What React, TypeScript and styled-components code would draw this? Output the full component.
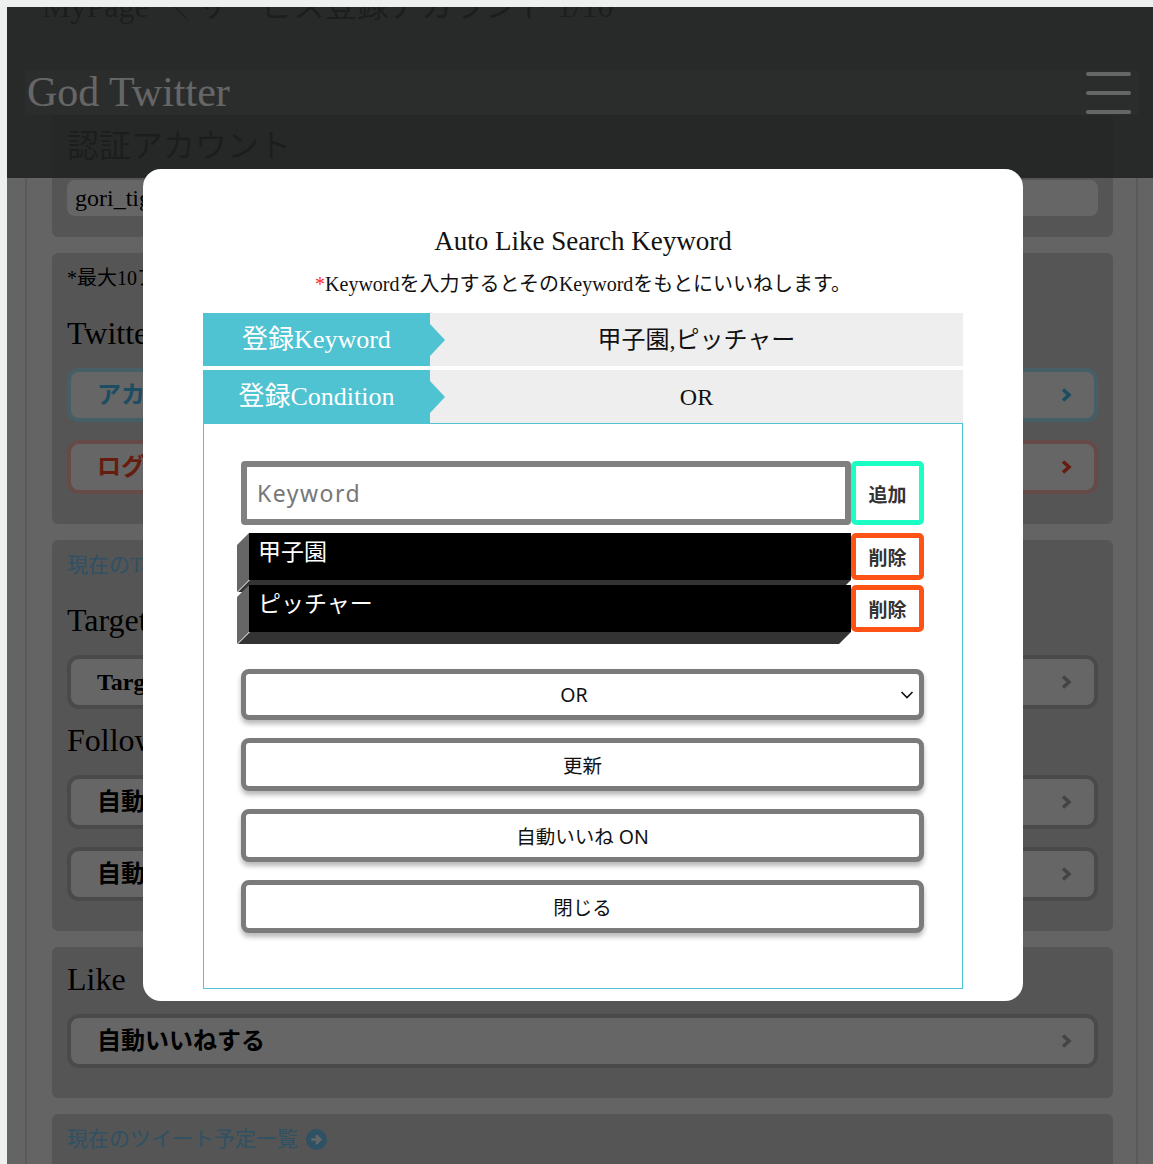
import React from "react";
import styled, { createGlobalStyle } from "styled-components";

const SERIF = `"Liberation Serif", "Noto Sans CJK JP", serif`;
const SANS = `"Noto Sans", "Noto Sans CJK JP", sans-serif`;
const CJK_SANS = `"Noto Sans CJK JP", "Noto Sans", sans-serif`;

const GlobalStyle = createGlobalStyle`
  *, *::before, *::after { box-sizing: border-box; }
  html, body { margin: 0; padding: 0; background: #eef0f0; }
  body { font-family: ${SERIF}; color: #000; }
`;

/* ---------- page behind the dialog ---------- */

const Screen = styled.div`
  position: relative;
  margin: 7px 0 0 7px;
  height: 1157px;
  overflow: hidden;
  background: #fbfbfb;
`;

const Header = styled.header`
  height: 171px;
  background: #646969;
  overflow: hidden;
`;

const Breadcrumb = styled.div`
  display: flow-root;
  height: 63px;
  padding-left: 35px;
  font-size: 32px;
  line-height: 32px;
  color: #474b4b;
  white-space: nowrap;
`;

const BreadcrumbText = styled.div`
  margin-top: -17px;
`;

const BrandBar = styled.div`
  height: 45px;
  margin: 0 15px 0 18px;
  background: #6c7171;
  display: flex;
  align-items: center;
  justify-content: space-between;
  padding: 0 7px 0 2px;
`;

const Brand = styled.h1`
  margin: 0;
  font: 400 42px/45px ${SERIF};
  color: #ffffff;
`;

const Burger = styled.div`
  width: 45px;
  display: flex;
  flex-direction: column;
  gap: 15px;
`;

const BurgerLine = styled.span`
  display: block;
  height: 4px;
  border-radius: 2px;
  background: #ffffff;
`;

const AuthHead = styled.div`
  height: 63px;
  margin: 0 40px 0 45px;
  background: #5f6464;
  padding: 0 15px;
  font: 400 32px/63px ${SERIF};
  color: #474b4b;
`;

const Container = styled.main`
  margin: 0 15px 0 18px;
  border-left: 2px solid #e2e2e2;
  border-right: 2px solid #e2e2e2;
  padding: 0 23px 60px 25px;
  display: flex;
  flex-direction: column;
  gap: 16px;
`;

const Card = styled.section<{ $flushTop?: boolean }>`
  background: #d4d4d4;
  border-radius: ${(p) => (p.$flushTop ? "0 0 6px 6px" : "6px")};
  padding: ${(p) => (p.$flushTop ? "2px 15px 21px" : "12px 15px 30px")};
  display: flex;
  flex-direction: column;
`;

const AccountField = styled.div`
  height: 36px;
  background: #ffffff;
  border-radius: 8px;
  padding: 0 8px;
  font: 400 24px/36px ${SERIF};
  color: #000;
`;

const Note = styled.p`
  margin: 0 0 22px;
  font: 400 20px/26px ${SERIF};
  color: #000;
`;

const SectionLink = styled.a<{ $last?: boolean }>`
  display: flex;
  align-items: center;
  gap: 8px;
  margin: 0 0 ${(p) => (p.$last ? "0" : "22px")};
  font: 400 21px/26px ${SERIF};
  color: #73cbf8;
  text-decoration: none;
`;

const SectionTitle = styled.h2<{ $after?: "button" }>`
  margin: ${(p) => (p.$after === "button" ? "11px" : "0")} 0 15px;
  font: 400 32px/40px ${SERIF};
  color: #000;
`;

const ButtonStack = styled.div`
  display: flex;
  flex-direction: column;
  gap: 18px;
`;

type Tone = "blue" | "red" | "gray";
const tones: Record<Tone, { border: string; text: string; icon: string }> = {
  blue: { border: "#aeecfd", text: "#48c0f5", icon: "#48c0f5" },
  red: { border: "#ffb8b2", text: "#ff4a2a", icon: "#ff4a2a" },
  gray: { border: "#b9b9b9", text: "#000000", icon: "#aaaaaa" },
};

const MenuButton = styled.button<{ $tone: Tone }>`
  height: 54px;
  border: 4px solid ${(p) => tones[p.$tone].border};
  border-radius: 12px;
  background: #ffffff;
  padding: 0 22px 0 26px;
  display: flex;
  align-items: center;
  justify-content: space-between;
  font: 700 24px/1 ${SERIF};
  color: ${(p) => tones[p.$tone].text};
  text-align: left;
`;

const Chevron = ({ color }: { color: string }) => (
  <svg width="12" height="16" viewBox="0 0 12 16">
    <path d="M3 2.5l6 5.5-6 5.5" stroke={color} strokeWidth="3.6" fill="none" />
  </svg>
);

const CircleArrow = ({ color }: { color: string }) => (
  <svg width="21" height="21" viewBox="0 0 20 20">
    <circle cx="10" cy="10" r="10" fill={color} />
    <path d="M5 10h8M9.5 6l4 4-4 4" stroke="#ffffff" strokeWidth="2.6" fill="none" />
  </svg>
);

/* ---------- dialog ---------- */

const Backdrop = styled.div`
  position: absolute;
  inset: 0;
  background: rgba(0, 0, 0, 0.6);
`;

const Modal = styled.div`
  position: absolute;
  left: 136px;
  top: 162px;
  width: 880px;
  background: #ffffff;
  border-radius: 18px;
  padding: 55px 60px 12px;
  display: flex;
  flex-direction: column;
`;

const ModalTitle = styled.h2`
  margin: 0;
  text-align: center;
  font: 400 27px/34px ${SERIF};
  color: #111;
`;

const ModalLead = styled.p`
  margin: 12px 0 15px;
  text-align: center;
  font: 400 20px/28px ${SERIF};
  color: #111;
`;

const Required = styled.span`
  color: #ff2a2a;
`;

const InfoTable = styled.div`
  display: flex;
  flex-direction: column;
  gap: 4px;
`;

const InfoRow = styled.div`
  display: grid;
  grid-template-columns: 227px 1fr;
  height: 53px;
`;

const InfoLabel = styled.div`
  position: relative;
  background: #4fc3d1;
  color: #ffffff;
  display: flex;
  align-items: center;
  justify-content: center;
  font: 400 26px/1 ${SERIF};
  &::after {
    content: "";
    position: absolute;
    right: -15px;
    top: 50%;
    transform: translateY(-50%);
    border-left: 15px solid #4fc3d1;
    border-top: 16px solid transparent;
    border-bottom: 16px solid transparent;
  }
`;

const InfoValue = styled.div`
  background: #eeeeee;
  display: flex;
  align-items: center;
  justify-content: center;
  font: 400 24px/1 ${SERIF};
  color: #111;
`;

const FormBox = styled.div`
  border: 1px solid #4fc3d1;
  padding: 37px 38px 55px 37px;
  display: flex;
  flex-direction: column;
`;

const EntryRow = styled.div`
  display: flex;
  height: 64px;
`;

const KeywordInput = styled.input`
  flex: 1;
  min-width: 0;
  height: 100%;
  border: 6px solid #808080;
  border-radius: 4px;
  padding: 0 10px;
  font: 400 23px ${SANS};
  letter-spacing: 1.5px;
  color: #222;
  background: #ffffff;
  outline: none;
  &::placeholder {
    color: #777777;
  }
`;

const TagButton = styled.button<{ $kind: "add" | "remove" }>`
  width: 73px;
  flex: none;
  padding: 0;
  border: 5px solid ${(p) => (p.$kind === "add" ? "#1cffc4" : "#ff5316")};
  border-radius: 5px;
  background: #ffffff;
  font: 700 19px/1 ${CJK_SANS};
  color: #333333;
`;

const KeywordList = styled.div`
  display: flex;
  flex-direction: column;
  gap: 5px;
  margin-top: 8px;
`;

const KeywordRow = styled.div`
  display: flex;
  height: 47px;
`;

const KeywordBar = styled.div`
  position: relative;
  flex: 1;
  margin-left: 8px;
  background: #000000;
  color: #ffffff;
  padding: 3px 9px;
  font: 400 23px/28px ${CJK_SANS};
  &::before {
    content: "";
    position: absolute;
    left: -12px;
    top: 0;
    width: 12px;
    height: calc(100% + 12px);
    background: #666666;
    clip-path: polygon(0 12px, 100% 0, 100% calc(100% - 12px), 0 100%);
  }
  &::after {
    content: "";
    position: absolute;
    left: -11px;
    bottom: -12px;
    width: calc(100% + 11px);
    height: 12px;
    background: #333333;
    clip-path: polygon(12px 0, 100% 0, calc(100% - 12px) 100%, 0 100%);
  }
`;

const SelectWrap = styled.div`
  position: relative;
  margin-top: 37px;
  height: 51px;
`;

const ConditionSelect = styled.select`
  appearance: none;
  width: 100%;
  height: 100%;
  border: 5px solid #7b7b7b;
  border-radius: 8px;
  background: #ffffff;
  padding: 0 17px 0 0;
  font: 400 19.5px ${SANS};
  color: #111;
  text-align: center;
  text-align-last: center;
  box-shadow: 0 4px 5px rgba(0, 0, 0, 0.28);
  outline: none;
`;

const SelectArrow = styled.span`
  position: absolute;
  right: 10px;
  top: 50%;
  transform: translateY(-50%);
  display: flex;
  pointer-events: none;
`;

const ActionStack = styled.div`
  display: flex;
  flex-direction: column;
  gap: 18px;
  margin-top: 18px;
`;

const ActionButton = styled.button`
  height: 53px;
  border: 5px solid #7b7b7b;
  border-radius: 8px;
  background: #ffffff;
  font: 400 19.5px ${SANS};
  color: #111;
  box-shadow: 0 4px 5px rgba(0, 0, 0, 0.28);
`;

const keywords = ["甲子園", "ピッチャー"];

export default function App() {
  return (
    <>
      <GlobalStyle />
      <Screen>
        <Header>
          <Breadcrumb>
            <BreadcrumbText>MyPage ＼ サービス登録アカウント 1/10</BreadcrumbText>
          </Breadcrumb>
          <BrandBar>
            <Brand>God Twitter</Brand>
            <Burger>
              <BurgerLine />
              <BurgerLine />
              <BurgerLine />
            </Burger>
          </BrandBar>
          <AuthHead>認証アカウント</AuthHead>
        </Header>

        <Container>
          <Card $flushTop>
            <AccountField>gori_tiger_baseball</AccountField>
          </Card>

          <Card>
            <Note>*最大10アカウントまで登録できます</Note>
            <SectionTitle>Twitterアカウント</SectionTitle>
            <ButtonStack>
              <MenuButton $tone="blue">
                アカウントを追加する
                <Chevron color={tones.blue.icon} />
              </MenuButton>
              <MenuButton $tone="red">
                ログアウトする
                <Chevron color={tones.red.icon} />
              </MenuButton>
            </ButtonStack>
          </Card>

          <Card>
            <SectionLink href="#">現在のTarget一覧</SectionLink>
            <SectionTitle>Target</SectionTitle>
            <ButtonStack>
              <MenuButton $tone="gray">
                Target設定
                <Chevron color={tones.gray.icon} />
              </MenuButton>
            </ButtonStack>
            <SectionTitle $after="button">Follow</SectionTitle>
            <ButtonStack>
              <MenuButton $tone="gray">
                自動フォローする
                <Chevron color={tones.gray.icon} />
              </MenuButton>
              <MenuButton $tone="gray">
                自動フォロー解除する
                <Chevron color={tones.gray.icon} />
              </MenuButton>
            </ButtonStack>
          </Card>

          <Card>
            <SectionTitle>Like</SectionTitle>
            <ButtonStack>
              <MenuButton $tone="gray">
                自動いいねする
                <Chevron color={tones.gray.icon} />
              </MenuButton>
            </ButtonStack>
          </Card>

          <Card>
            <SectionLink href="#" $last>
              現在のツイート予定一覧
              <CircleArrow color="#73cbf8" />
            </SectionLink>
          </Card>
        </Container>

        <Backdrop />

        <Modal>
          <ModalTitle>Auto Like Search Keyword</ModalTitle>
          <ModalLead>
            <Required>*</Required>Keywordを入力するとそのKeywordをもとにいいねします。
          </ModalLead>
          <InfoTable>
            <InfoRow>
              <InfoLabel>登録Keyword</InfoLabel>
              <InfoValue>甲子園,ピッチャー</InfoValue>
            </InfoRow>
            <InfoRow>
              <InfoLabel>登録Condition</InfoLabel>
              <InfoValue>OR</InfoValue>
            </InfoRow>
          </InfoTable>
          <FormBox>
            <EntryRow>
              <KeywordInput placeholder="Keyword" />
              <TagButton $kind="add">追加</TagButton>
            </EntryRow>
            <KeywordList>
              {keywords.map((k) => (
                <KeywordRow key={k}>
                  <KeywordBar>{k}</KeywordBar>
                  <TagButton $kind="remove">削除</TagButton>
                </KeywordRow>
              ))}
            </KeywordList>
            <SelectWrap>
              <ConditionSelect defaultValue="OR">
                <option value="OR">OR</option>
                <option value="AND">AND</option>
              </ConditionSelect>
              <SelectArrow>
                <svg width="14" height="10" viewBox="0 0 14 10">
                  <path d="M1.5 2l5.5 5.5L12.5 2" stroke="#111" strokeWidth="1.6" fill="none" />
                </svg>
              </SelectArrow>
            </SelectWrap>
            <ActionStack>
              <ActionButton>更新</ActionButton>
              <ActionButton>自動いいね ON</ActionButton>
              <ActionButton>閉じる</ActionButton>
            </ActionStack>
          </FormBox>
        </Modal>
      </Screen>
    </>
  );
}
